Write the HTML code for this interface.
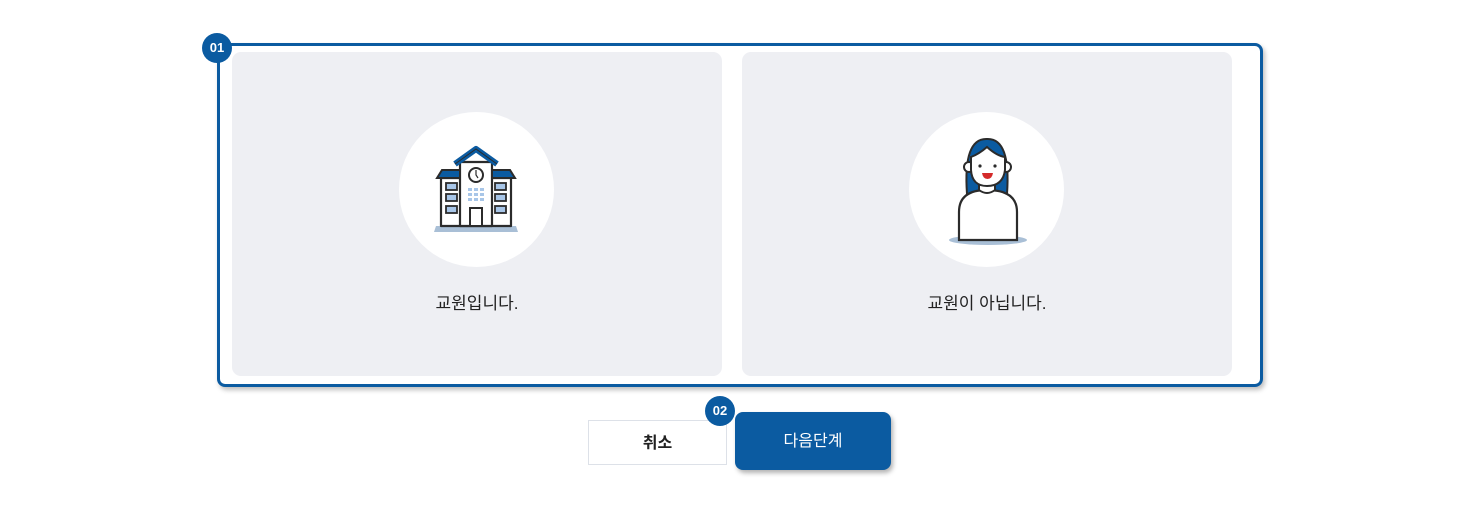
<!DOCTYPE html>
<html><head><meta charset="utf-8"><style>
*{margin:0;padding:0;box-sizing:border-box}
body{width:1479px;height:513px;background:#fff;position:relative;font-family:"Liberation Sans","Noto Sans CJK KR",sans-serif;overflow:hidden}
.box{position:absolute;left:217px;top:43px;width:1046px;height:344px;border:3px solid #0b5ba1;border-radius:8px;box-shadow:2px 3px 5px rgba(0,0,0,.25)}
.card{position:absolute;top:52px;width:490px;height:324px;background:#eeeff3;border-radius:9px}
.circ{position:absolute;left:167px;top:60px;width:155px;height:155px;border-radius:50%;background:#fff}
.lbl{position:absolute;left:0;right:0;top:237px;text-align:center;font-size:17px;color:#222}
.badge{position:absolute;width:30px;height:30px;border-radius:50%;background:#0b5ba1;color:#fff;font-size:13px;font-weight:bold;text-align:center;line-height:30px}
.cancel{position:absolute;left:588px;top:420px;width:139px;height:45px;border:1px solid #dde1e8;background:#fff;text-align:center;line-height:45px;font-size:16px;font-weight:bold;color:#222}
.next{position:absolute;left:735px;top:412px;width:156px;height:58px;border-radius:8px;background:#0b5ba1;color:#fff;text-align:center;line-height:60px;font-size:16px;box-shadow:2px 3px 5px rgba(0,0,0,.3)}
</style></head><body>
<div class="box"></div>
<div class="card" style="left:232px"><div class="circ">
<svg width="155" height="155" viewBox="0 0 155 155">
<path d="M37 114 L117 114 L119 120 L35 120Z" fill="#a9bfd6"/>
<g stroke="#2b2b2b" stroke-width="2.2" fill="#fff" stroke-linejoin="round">
<rect x="42" y="66" width="70" height="48"/>
<rect x="61" y="50" width="32" height="64"/>
</g>
<path d="M38 66 L43 58 L61 58 L61 66Z M116 66 L111 58 L93 58 L93 66Z" fill="#0b5ba1" stroke="#2b2b2b" stroke-width="2"/>
<path d="M56 52 L77 37 L98 52" fill="none" stroke="#0b5ba1" stroke-width="6" stroke-linejoin="round"/>
<path d="M56 52 L77 37 L98 52" fill="none" stroke="#2b2b2b" stroke-width="1"/>
<circle cx="77" cy="63" r="7" fill="#fff" stroke="#2b2b2b" stroke-width="2"/>
<path d="M77 58V63L79 66" stroke="#2b2b2b" fill="none" stroke-width="1.2"/>
<g fill="#a8c6e8" stroke="#2b2b2b" stroke-width="1.8">
<rect x="47" y="71" width="11" height="7"/><rect x="47" y="82" width="11" height="7"/><rect x="47" y="94" width="11" height="7"/>
<rect x="96" y="71" width="11" height="7"/><rect x="96" y="82" width="11" height="7"/><rect x="96" y="94" width="11" height="7"/>
</g>
<g fill="#a8c6e8"><rect x="69" y="76" width="4" height="3"/><rect x="75" y="76" width="4" height="3"/><rect x="81" y="76" width="4" height="3"/>
<rect x="69" y="81" width="4" height="3"/><rect x="75" y="81" width="4" height="3"/><rect x="81" y="81" width="4" height="3"/>
<rect x="69" y="86" width="4" height="3"/><rect x="75" y="86" width="4" height="3"/><rect x="81" y="86" width="4" height="3"/></g>
<rect x="71" y="96" width="12" height="18" fill="#fff" stroke="#2b2b2b" stroke-width="2"/>
</svg></div><div class="lbl">교원입니다.</div></div>
<div class="card" style="left:742px"><div class="circ">
<svg width="155" height="155" viewBox="0 0 155 155">
<ellipse cx="79" cy="128" rx="39" ry="5" fill="#a9bfd6"/>
<path d="M58 82 Q54 26 78 27 Q102 26 98 82Z" fill="#0b5ba1" stroke="#2b2b2b" stroke-width="2"/>
<path d="M50 128 V100 Q50 78 78 78 Q108 78 108 100 V128Z" fill="#fff" stroke="#2b2b2b" stroke-width="2.2"/>
<path d="M70 68 V78 Q78 84 86 78 V68" fill="#fff" stroke="#2b2b2b" stroke-width="2"/>
<circle cx="60" cy="55" r="5" fill="#fff" stroke="#2b2b2b" stroke-width="2"/>
<circle cx="97" cy="55" r="5" fill="#fff" stroke="#2b2b2b" stroke-width="2"/>
<path d="M62 45 Q70 42 78 35 Q88 44 96 45 V58 Q94 74 78 74 Q63 74 62 58Z" fill="#fff" stroke="#2b2b2b" stroke-width="2"/>
<circle cx="71" cy="54" r="1.6" fill="#2b2b2b"/><circle cx="86" cy="54" r="1.6" fill="#2b2b2b"/>
<path d="M73 61 H84 Q83 67 78.5 67 Q74 67 73 61Z" fill="#d42a2a"/>
</svg></div><div class="lbl">교원이 아닙니다.</div></div>
<div class="badge" style="left:202px;top:33px">01</div>
<div class="cancel">취소</div>
<div class="next">다음단계</div>
<div class="badge" style="left:705px;top:396px">02</div>
</body></html>
